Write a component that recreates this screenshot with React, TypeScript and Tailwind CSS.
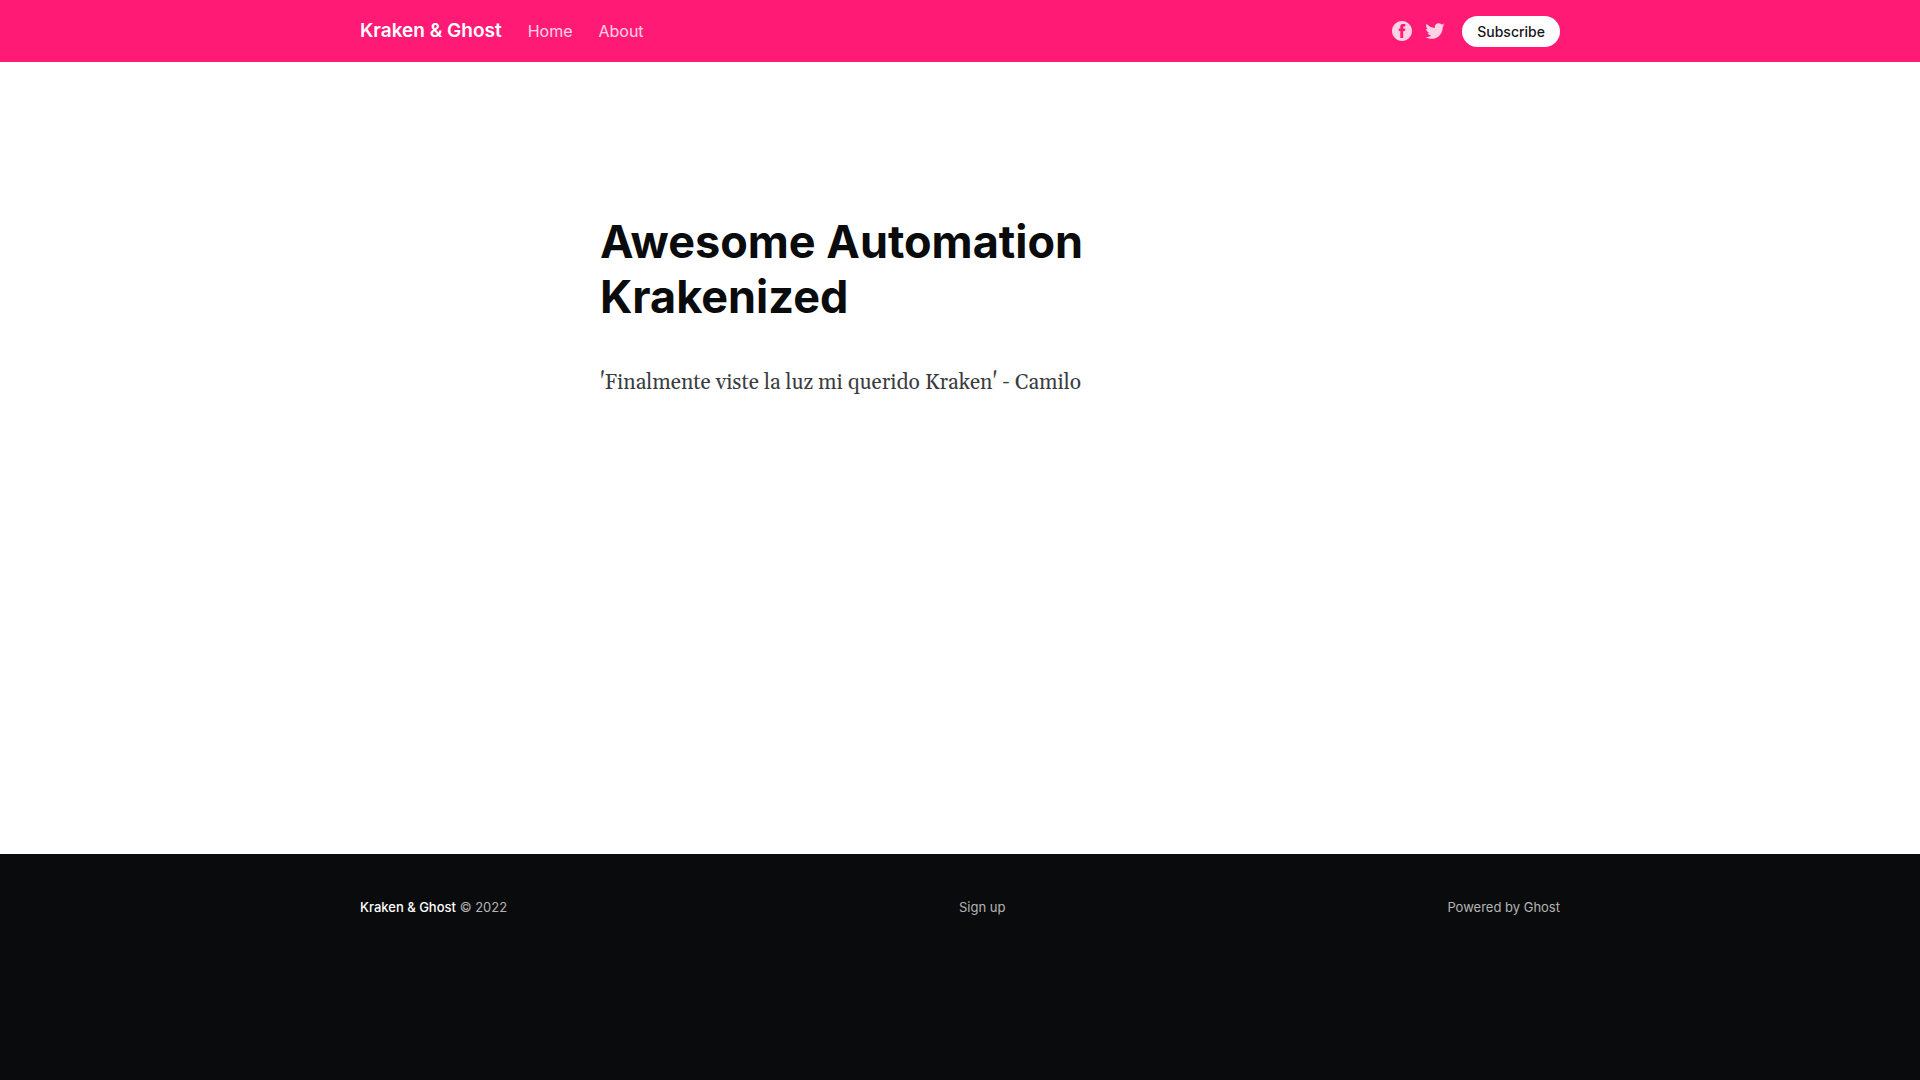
const link = "text-white/80 hover:text-white";

export default function App() {
  return (
    <div className="flex min-h-screen flex-col bg-white font-['Inter',sans-serif] text-base text-[#15171a]">
      <header className="bg-[#ff1a75] px-5 text-white">
        <div className="mx-auto flex min-h-[62px] max-w-[1200px] flex-wrap items-center justify-between">
          <nav className="flex items-center gap-[26px]">
            <a href="#" className="text-[19px] font-semibold">Kraken &amp; Ghost</a>
            <a href="#" className={link}>Home</a>
            <a href="#" className={link}>About</a>
          </nav>
          <div className="flex items-center">
            <a href="#" aria-label="Facebook" className="mr-3 text-white/80">
              <svg viewBox="0 0 32 32" className="size-5" fill="currentColor">
                <path d="M16 0c8.837 0 16 7.163 16 16s-7.163 16-16 16S0 24.837 0 16 7.163 0 16 0zm5.204 4.911h-3.546c-2.103 0-4.443.885-4.443 3.934.01 1.062 0 2.08 0 3.225h-2.433v3.872h2.509v11.147h4.61v-11.22h3.042l.275-3.81h-3.397s.007-1.695 0-2.187c0-1.205 1.253-1.136 1.329-1.136h2.054V4.911z" />
              </svg>
            </a>
            <a href="#" aria-label="Twitter" className="mr-4 text-white/80">
              <svg viewBox="0 0 32 32" className="size-[22px]" fill="currentColor">
                <path d="M30.063 7.313c-.813 1.125-1.75 2.125-2.875 2.938v.75c0 1.563-.188 3.125-.688 4.625a15.088 15.088 0 0 1-2.063 4.438c-.875 1.438-2 2.688-3.25 3.813a15.015 15.015 0 0 1-4.625 2.563c-1.813.688-3.75 1-5.75 1-3.25 0-6.188-.875-8.875-2.625.438.063.875.125 1.375.125 2.688 0 5.063-.875 7.188-2.5-1.25 0-2.375-.375-3.375-1.125s-1.688-1.688-2.063-2.875c.438.063.813.125 1.125.125.5 0 1-.063 1.5-.25-1.313-.25-2.438-.938-3.313-1.938a5.673 5.673 0 0 1-1.313-3.688v-.063c.813.438 1.688.688 2.625.688a5.228 5.228 0 0 1-1.875-2c-.5-.875-.688-1.813-.688-2.75 0-1.063.25-2.063.75-2.938 1.438 1.75 3.188 3.188 5.25 4.25s4.313 1.688 6.688 1.813a5.579 5.579 0 0 1 1.5-5.438c1.125-1.125 2.5-1.688 4.125-1.688s3.063.625 4.188 1.813a11.48 11.48 0 0 0 3.688-1.375c-.438 1.375-1.313 2.438-2.563 3.188 1.125-.125 2.188-.438 3.313-.875z" />
              </svg>
            </a>
            <a href="#" className="rounded-full bg-white px-[15px] py-1 text-sm leading-[23px] font-medium text-[#15171a]">Subscribe</a>
          </div>
        </div>
      </header>
      <main className="grow px-5">
        <article className="mx-auto max-w-[720px] pt-[152px] pb-20">
          <h1 className="max-w-[560px] text-[45px] leading-[55px] font-bold text-[#0a0b0c]">
            Awesome Automation
            <br />
            Krakenized
          </h1>
          <p className="mt-[41px] font-[Georgia,Gelasio,'Liberation_Serif',serif] text-[21px] leading-9 text-[#3a3c40]">'Finalmente viste la luz mi querido Kraken' - Camilo</p>
        </article>
      </main>
      <footer className="bg-[#0a0b0c] px-5 pt-10 pb-40 text-[13px] leading-[26px] text-white/70">
        <div className="mx-auto grid max-w-[1200px] grid-cols-[auto_1fr_auto] items-center">
          <p><a href="#" className="font-medium text-white">Kraken &amp; Ghost</a> © 2022</p>
          <nav className="flex justify-center pl-2.5">
            <a href="#">Sign up</a>
          </nav>
          <a href="#">Powered by Ghost</a>
        </div>
      </footer>
    </div>
  );
}
